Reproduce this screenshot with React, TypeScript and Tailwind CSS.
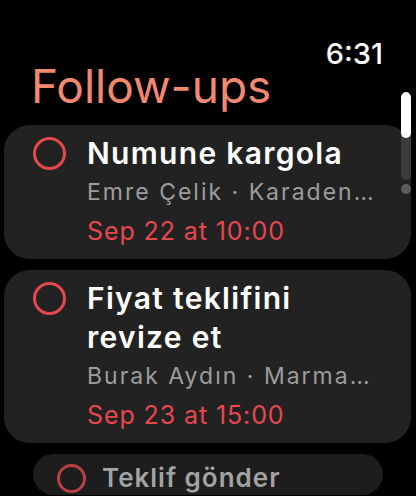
import React from "react";

type Reminder = {
  title: string;
  meta: string;
  due: string;
};

const reminders: Reminder[] = [
  { title: "Numune kargola", meta: "Emre Çelik · Karaden…", due: "Sep 22 at 10:00" },
  { title: "Fiyat teklifini revize et", meta: "Burak Aydın · Marma…", due: "Sep 23 at 15:00" },
];

function Ring({ size }: { size: string }) {
  return <div className={`${size} shrink-0 rounded-full border-[3px] border-[#e5484d]`} />;
}

function ReminderCard({ item }: { item: Reminder }) {
  return (
    <div className="ml-[4px] w-[407px] rounded-[26px] bg-[#222222] pt-[9px] pb-[8px] pl-[29px] pr-[30px]">
      <div className="flex gap-[21px]">
        <div className="flex h-[39px] items-center">
          <Ring size="h-[33px] w-[33px]" />
        </div>
        <div className="min-w-0 flex-1">
          <div className="text-[30px] font-semibold leading-[39px] tracking-[1.3px] text-white">{item.title}</div>
          <div className="whitespace-nowrap text-[23px] leading-[39px] tracking-[2px] text-[#9d9d9d]">{item.meta}</div>
          <div className="text-[25px] leading-[39px] tracking-[0.9px] text-[#e8474f]">{item.due}</div>
        </div>
      </div>
    </div>
  );
}

export default function App() {
  return (
    <div
      className="relative h-[496px] w-[416px] overflow-hidden bg-black"
      style={{ fontFamily: "Inter, 'Noto Sans', sans-serif" }}
    >
      <div className="flex justify-end pr-[33px] pt-[37px]">
        <span className="text-[29px] font-medium leading-[34px] text-white">6:31</span>
      </div>
      <h1 className="-mt-[13px] pl-[31px] text-[46px] font-normal leading-[56px] text-[#f2896f]">Follow-ups</h1>

      <div className="mt-[11px] flex flex-col gap-[11px]">
        {reminders.map((r) => (
          <ReminderCard key={r.title} item={r} />
        ))}
        <div className="ml-[33px] w-[350px] rounded-[24px] bg-[#1d1d1d] pt-[7px] pl-[24px]">
          <div className="flex items-center gap-[16px]">
            <Ring size="h-[29px] w-[29px] opacity-80" />
            <span className="text-[26px] font-semibold leading-[34px] tracking-[1px] text-[#a3a3a3]">Teklif gönder</span>
          </div>
        </div>
      </div>

      {/* scroll indicator */}
      <div className="absolute left-[401px] top-[92px] flex w-[10px] flex-col items-center gap-[4px]">
        <div className="h-[88px] w-[10px] overflow-hidden rounded-full bg-[#3b3b3b]">
          <div className="h-[46px] w-[10px] rounded-full bg-white" />
        </div>
        <div className="h-[10px] w-[10px] rounded-full bg-[#5c5c5c]" />
      </div>
    </div>
  );
}
